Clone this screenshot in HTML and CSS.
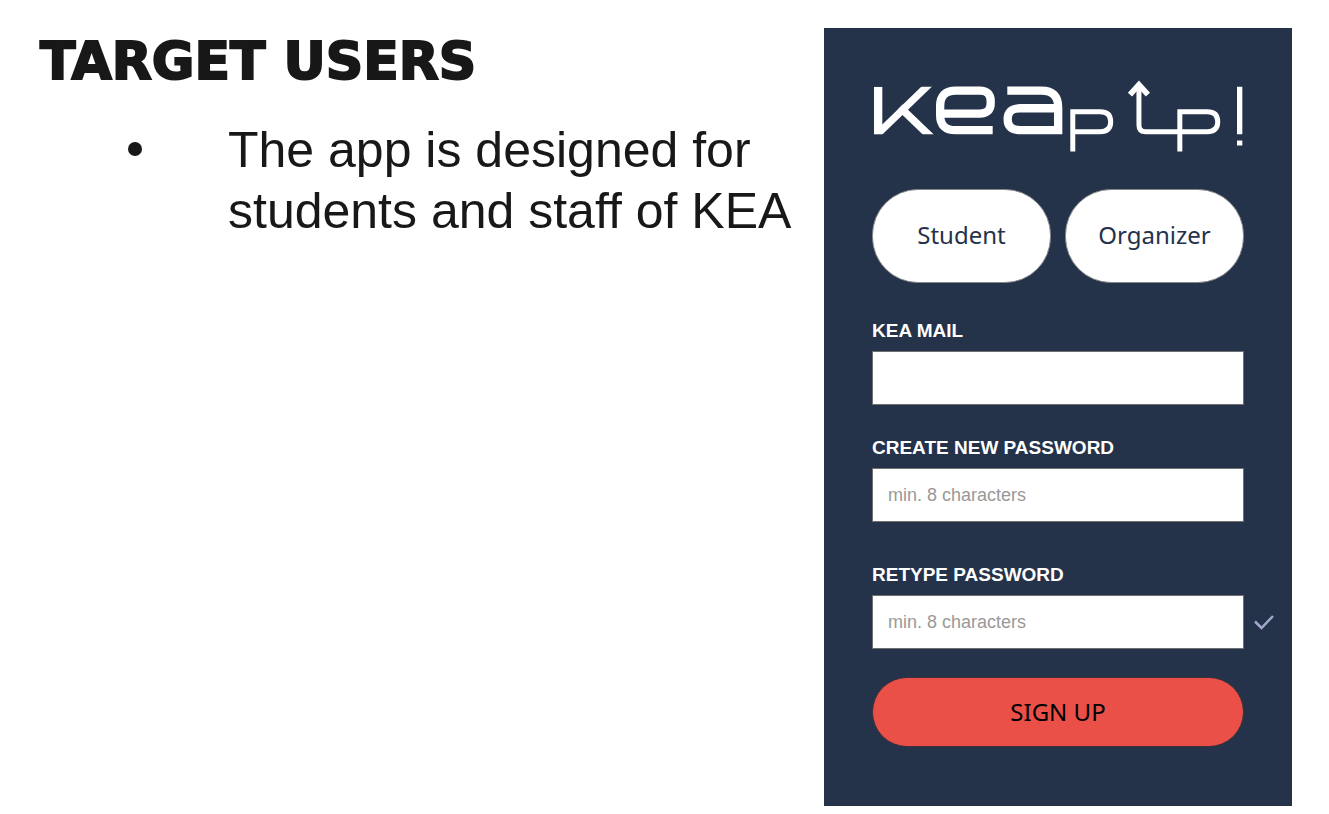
FILE: index.html
```html
<!DOCTYPE html>
<html lang="en">
<head>
<meta charset="utf-8">
<title>Target users</title>
<meta name="viewport" content="width=device-width, initial-scale=1">
<link rel="stylesheet" href="styles.css">
</head>
<body>
<main class="slide">
  <section class="copy">
    <h1 class="title">TARGET USERS</h1>
    <ul class="points">
      <li class="point"><span class="bullet" aria-hidden="true"></span><span class="point-text">The app is designed for students and staff of KEA</span></li>
    </ul>
  </section>
  <form class="panel">
    <svg class="logo" viewBox="0 0 1119 222" role="img" aria-label="KEA pip up!">
      <defs><clipPath id="band"><rect x="6" y="20" width="200" height="143"/></clipPath></defs>
      <g fill="none" stroke="#fff" stroke-width="25">
        <g clip-path="url(#band)">
          <path d="M18.500 20V163"/>
          <path d="M10 169L185 0" stroke-width="22"/>
          <path d="M84 82L188 182" stroke-width="23"/>
        </g>
        <path d="M363 151H252Q205 151 205 106V78Q205 32 252 32H324Q357 32 357 64V70Q357 101 324 101H205"/>
        <path d="M407 32H510Q560 32 560 82V163M560 85H445Q408 85 408 118Q408 151 445 151H560"/>
      </g>
      <g fill="none" stroke="#fff" stroke-width="15">
        <path d="M604 215V95.500H686Q718 95.500 718 125.500Q718 155.500 686 155.500H604"/>
        <path d="M803 12V135Q803 155.500 823 155.500H1008Q1040 155.500 1040 125.500Q1040 95.500 1008 95.500H926V215"/>
        <path d="M776 44L803 14L830 44" stroke-width="17"/>
        <path d="M1106 20V163M1106 182V197" stroke-width="16"/>
      </g>
    </svg>
    <div class="roles">
      <button class="role" type="button">Student</button>
      <button class="role" type="button">Organizer</button>
    </div>
    <div class="field">
      <label class="label" for="mail">KEA MAIL</label>
      <input class="input" id="mail" type="email">
    </div>
    <div class="field field-password">
      <label class="label" for="password">CREATE NEW PASSWORD</label>
      <input class="input" id="password" type="password" placeholder="min. 8 characters">
    </div>
    <div class="field field-retype">
      <label class="label" for="retype">RETYPE PASSWORD</label>
      <div class="checked">
        <input class="input" id="retype" type="password" placeholder="min. 8 characters">
        <svg class="check" viewBox="0 0 20 16" aria-hidden="true"><path d="M1 7.500L7.500 14L19 2"/></svg>
      </div>
    </div>
    <button class="submit" type="submit">SIGN UP</button>
  </form>
</main>
</body>
</html>
```
FILE: styles.css
```css
* {
  box-sizing: border-box;
}

body {
  margin: 0;
  background: #fff;
  color: #181818;
  font-family: "Liberation Sans", Arial, sans-serif;
}

.slide {
  display: flex;
  align-items: flex-start;
  gap: 16px;
  padding: 28px 37px 8px 40px;
}

.copy {
  flex: 1;
}

.title {
  margin: 0;
  font-family: "DejaVu Sans", "Arial Black", sans-serif;
  font-size: 52px;
  font-weight: 700;
  line-height: 66px;
  -webkit-text-stroke: 2px #181818;
}

.points {
  margin: 26px 0 0;
  padding: 0;
  list-style: none;
}

.point {
  display: flex;
  font-size: 50px;
  line-height: 61px;
}

.bullet {
  flex: none;
  width: 14px;
  height: 14px;
  margin: 22px 86px 0 88px;
  border-radius: 50%;
  background: #181818;
}

.panel {
  flex: 0 1 468px;
  display: flex;
  flex-direction: column;
  padding: 52px 48px 59px;
  background: #24324a;
}

.logo {
  display: block;
  width: 100%;
  overflow: visible;
}

.roles {
  display: grid;
  grid-template-columns: 1fr 1fr;
  gap: 14px;
  margin: 35px 0 36px;
}

.role,
.submit {
  padding: 0;
  font-family: "Noto Sans", "Segoe UI", sans-serif;
  font-size: 24px;
  line-height: 32px;
}

.role {
  height: 94px;
  padding-bottom: 2px;
  border: 1px solid #85868a;
  border-radius: 46px;
  background: #fff;
  color: #24324a;
}

.field-password {
  margin-top: 31px;
}

.field-retype {
  margin-top: 41px;
}

.label {
  display: block;
  margin-bottom: 8px;
  color: #fff;
  font-size: 19px;
  font-weight: 700;
  line-height: 24px;
}

.input {
  display: block;
  width: 100%;
  height: 54px;
  padding: 2px 15px 0;
  border: 1px solid #707070;
  border-radius: 0;
  background: #fff;
  color: #24324a;
  font-family: inherit;
  font-size: 18px;
}

.input::placeholder {
  color: #999;
  opacity: 1;
}

.checked {
  display: flex;
  align-items: center;
  gap: 10px;
  margin-right: -30px;
}

.check {
  flex: none;
  width: 20px;
  height: 16px;
  fill: none;
  stroke: #a3a8cc;
  stroke-width: 2.5;
}

.submit {
  height: 70px;
  margin-top: 28px;
  border: 1px solid #40303a;
  border-radius: 35px;
  background: #ea5047;
  color: #000;
}
```
